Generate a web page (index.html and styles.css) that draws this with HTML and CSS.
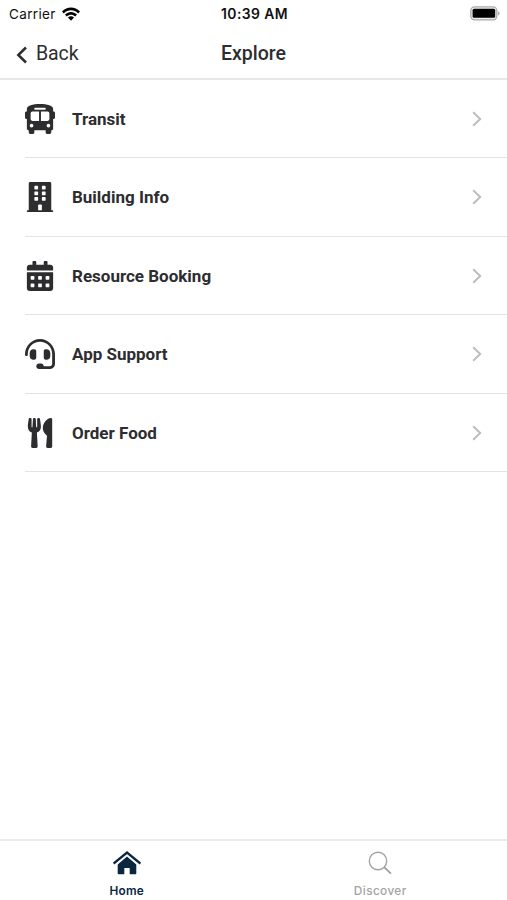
FILE: index.html
```html
<!DOCTYPE html>
<html lang="en">
<head>
<meta charset="utf-8">
<title>Explore</title>
<link rel="stylesheet" href="styles.css">
</head>
<body>
<div class="app">
  <header class="header">
    <div class="status">
      <div class="carrier"><span>Carrier</span>
        <svg class="wifi" viewBox="0 0 18 14"><path d="M0 4.5C5-.9 13-.9 18 4.5l-1.8 1.9c-4-4.2-10.4-4.2-14.4 0z"/><path d="M3 7.6c3.4-3.5 8.6-3.5 12 0l-1.8 1.9c-2.4-2.4-6-2.4-8.4 0z"/><path d="M6 10.6c1.8-1.7 4.2-1.7 6 0L9 13.7z"/></svg>
      </div>
      <span class="time">10:39 AM</span>
      <svg class="battery" viewBox="0 0 30 15"><rect x=".8" y=".8" width="26" height="13" rx="3.8" fill="#eee" stroke="#a9a9a9" stroke-width="1.3"/><rect x="2.6" y="2.8" width="22.6" height="9" rx="1.5"/><path d="M28 5.2c2.2.8 2.2 3.4 0 4.2z" fill="#a9a9a9"/></svg>
    </div>
    <div class="nav">
      <a class="back"><svg viewBox="0 0 12 18"><path d="M10 1.5 2.3 9l7.7 7.5" fill="none" stroke="#2d2d2f" stroke-width="2.5"/></svg><span>Back</span></a>
      <h1>Explore</h1>
    </div>
  </header>
  <main class="list">
    <a class="row">
      <svg class="icon" viewBox="0 0 512 512"><path fill-rule="evenodd" d="M488 128h-8V80c0-45-99-80-224-80S32 35 32 80v48h-8c-13 0-24 11-24 24v80c0 13 11 24 24 24h8v160c0 18 14 32 32 32v32c0 18 14 32 32 32h32c18 0 32-14 32-32v-32h192v32c0 18 14 32 32 32h32c18 0 32-14 32-32v-32h6c16 0 26-13 26-26V256h8c13 0 24-11 24-24v-80c0-13-11-24-24-24zM160 72c0-4 4-8 8-8h176c4 0 8 4 8 8v16c0 4-4 8-8 8H168c-4 0-8-4-8-8zM112 400a32 32 0 1 1 0-64 32 32 0 0 1 0 64zm128-112H128c-18 0-32-14-32-32V160c0-18 14-32 32-32h112zm32 0V128h112c18 0 32 14 32 32v96c0 18-14 32-32 32zm128 112a32 32 0 1 1 0-64 32 32 0 0 1 0 64z"/></svg>
      <span class="label">Transit</span><svg class="chevron" viewBox="0 0 10 16"><path d="m1.2 1.2 7 6.8-7 6.8"/></svg>
    </a>
    <a class="row">
      <svg class="icon" viewBox="-32 0 512 512"><path fill-rule="evenodd" d="M436 480h-20V24c0-13-11-24-24-24H56C43 0 32 11 32 24v456H12c-7 0-12 5-12 12v20h448v-20c0-7-5-12-12-12zM128 76c0-7 5-12 12-12h40c7 0 12 5 12 12v40c0 7-5 12-12 12h-40c-7 0-12-5-12-12zm0 96c0-7 5-12 12-12h40c7 0 12 5 12 12v40c0 7-5 12-12 12h-40c-7 0-12-5-12-12zm52 148h-40c-7 0-12-5-12-12v-40c0-7 5-12 12-12h40c7 0 12 5 12 12v40c0 7-5 12-12 12zm76 160h-64v-84c0-7 5-12 12-12h40c7 0 12 5 12 12zm64-172c0 7-5 12-12 12h-40c-7 0-12-5-12-12v-40c0-7 5-12 12-12h40c7 0 12 5 12 12zm0-96c0 7-5 12-12 12h-40c-7 0-12-5-12-12v-40c0-7 5-12 12-12h40c7 0 12 5 12 12zm0-96c0 7-5 12-12 12h-40c-7 0-12-5-12-12V76c0-7 5-12 12-12h40c7 0 12 5 12 12z"/></svg>
      <span class="label">Building Info</span><svg class="chevron" viewBox="0 0 10 16"><path d="m1.2 1.2 7 6.8-7 6.8"/></svg>
    </a>
    <a class="row">
      <svg class="icon" viewBox="-32 0 512 512"><path d="M0 160v-48c0-27 21-48 48-48h48V12c0-7 5-12 12-12h40c7 0 12 5 12 12v52h128V12c0-7 5-12 12-12h40c7 0 12 5 12 12v52h48c27 0 48 21 48 48v48z"/><path fill-rule="evenodd" d="M0 192h448v272c0 27-21 48-48 48H48c-27 0-48-21-48-48zm64 76v40q0 12 12 12h40q12 0 12-12v-40q0-12-12-12H76q-12 0-12 12zm128 0v40q0 12 12 12h40q12 0 12-12v-40q0-12-12-12h-40q-12 0-12 12zm128 0v40q0 12 12 12h40q12 0 12-12v-40q0-12-12-12h-40q-12 0-12 12zM64 396v40q0 12 12 12h40q12 0 12-12v-40q0-12-12-12H76q-12 0-12 12zm128 0v40q0 12 12 12h40q12 0 12-12v-40q0-12-12-12h-40q-12 0-12 12zm128 0v40q0 12 12 12h40q12 0 12-12v-40q0-12-12-12h-40q-12 0-12 12z"/></svg>
      <span class="label">Resource Booking</span><svg class="chevron" viewBox="0 0 10 16"><path d="m1.2 1.2 7 6.8-7 6.8"/></svg>
    </a>
    <a class="row">
      <svg class="icon" viewBox="0 0 512 512"><path d="M192 208c0-18-14-32-32-32h-16c-35 0-64 29-64 64v48c0 35 29 64 64 64h16c18 0 32-14 32-32zm176 144c35 0 64-29 64-64v-48c0-35-29-64-64-64h-16c-18 0-32 14-32 32v112c0 18 14 32 32 32zM256 0C113 0 5 119 0 256v16c0 9 7 16 16 16h16c9 0 16-7 16-16v-16c0-115 93-208 208-208s208 93 208 208v166c0 23-19 42-42 42H320c0-27-21-48-48-48h-32c-27 0-48 21-48 48s21 48 48 48h182c50 0 90-40 90-90V256C507 119 399 0 256 0z"/></svg>
      <span class="label">App Support</span><svg class="chevron" viewBox="0 0 10 16"><path d="m1.2 1.2 7 6.8-7 6.8"/></svg>
    </a>
    <a class="row">
      <svg class="icon" viewBox="-48 0 512 512"><path d="M207.9 15.2c.8 4.7 16.1 94.5 16.1 128.8 0 52.3-27.8 89.6-68.9 104.6L168 486.7c.7 13.7-10.2 25.3-24 25.3H80c-13.7 0-24.7-11.5-24-25.3l12.9-238.1C27.7 233.6 0 196.2 0 144 0 109.6 15.3 19.9 16.1 15.2 19.3-5.1 61.4-5.4 64 16.3v141.2c1.3 3.4 15.1 3.2 16 0 1.4-25.3 7.9-139.2 8-141.8 3.3-20.8 44.7-20.8 47.9 0 .2 2.7 6.6 116.5 8 141.8.9 3.2 14.8 3.4 16 0V16.3c2.6-21.6 44.8-21.4 48-1.1zm119.2 285.7-15 185.1c-1.2 14 9.9 26 23.9 26h56c13.3 0 24-10.7 24-24V24c0-13.2-10.7-24-24-24-82.5 0-221.4 178.5-64.9 300.9z"/></svg>
      <span class="label">Order Food</span><svg class="chevron" viewBox="0 0 10 16"><path d="m1.2 1.2 7 6.8-7 6.8"/></svg>
    </a>
  </main>
  <nav class="tabs">
    <a class="tab active"><svg viewBox="0 0 28 24"><path d="M14 5.6 23.3 13.4V22.3a1 1 0 0 1-1 1h-5.6v-6.4h-5.4v6.4H5.7a1 1 0 0 1-1-1V13.4z"/><path d="m.6 12.6 13.4-11 13.4 11" fill="none" stroke="#0b2740" stroke-width="2.3"/></svg><span>Home</span></a>
    <a class="tab"><svg viewBox="0 0 28 24"><g fill="none" stroke="#a3a3a3" stroke-width="1.4"><circle cx="12" cy="10" r="8.7"/><path d="m18 16 7 6.7" stroke-width="1.8"/></g></svg><span>Discover</span></a>
  </nav>
</div>
</body>
</html>
```
FILE: styles.css
```css
* { box-sizing: border-box; }
body { margin: 0; background: #fff; color: #2d2d2f; font-family: Roboto, sans-serif; }
svg { display: block; flex: none; }
.app { height: 900px; display: flex; flex-direction: column; overflow: hidden; }
.header { height: 79.6px; border-bottom: 2px solid #e8e8e8; }
.status { height: 27px; display: grid; grid-template-columns: 1fr auto 1fr; align-items: center; padding: 0 7px 0 9px; font: 13.5px Inter, sans-serif; color: #111; }
.carrier { display: flex; align-items: center; gap: 6px; letter-spacing: .35px; }
.wifi { width: 18px; height: 14px; }
.time { font-weight: 600; font-size: 13.9px; letter-spacing: .4px; }
.battery { width: 30px; height: 15px; justify-self: end; }
.nav { height: 52px; display: grid; grid-template-columns: 1fr auto 1fr; align-items: center; padding: 1px 16px 0; }
.back { display: flex; align-items: center; gap: 8px; font-size: 19.5px; letter-spacing: -.1px; }
.back svg { width: 12px; height: 18px; margin-top: 3px; }
h1 { margin: 0; font-size: 19.5px; font-weight: 500; }
.list { flex: 1; }
.row { height: 78.5px; margin-left: 25px; padding: 1px 25px 0 0; display: flex; align-items: center; border-bottom: 1px solid #e4e4e4; }
.icon { width: 30px; height: 30px; fill: #2d2d2f; }
.label { flex: 1; margin-left: 17px; font-size: 17px; font-weight: 700; }
.chevron { width: 10px; height: 16px; fill: none; stroke: #bdbdbd; stroke-width: 2; }
.tabs { height: 61px; border-top: 2px solid #ececec; display: flex; }
.tab { flex: 1; display: flex; flex-direction: column; align-items: center; padding-top: 10px; font: 500 11.8px/15px Inter, sans-serif; letter-spacing: .4px; color: #a3a3a3; }
.tab svg { width: 28px; height: 24px; margin-bottom: 9px; }
.active { color: #0b2740; fill: #0b2740; font-weight: 600; letter-spacing: .2px; }
```
